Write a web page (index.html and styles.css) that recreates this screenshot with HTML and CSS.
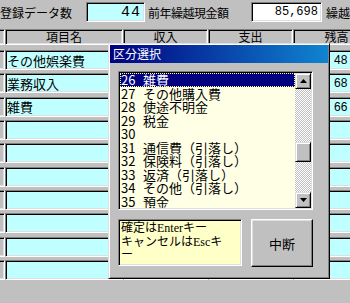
FILE: index.html
```html
<!DOCTYPE html>
<html lang="ja">
<head>
<meta charset="utf-8">
<title>区分選択</title>
<link rel="stylesheet" href="styles.css">
</head>
<body>
<div class="screen">
  <div class="topbar">
    <span class="label label-count">登録データ数</span>
    <span class="field field-cyan field-count">44</span>
    <span class="label label-carry">前年繰越現金額</span>
    <span class="field field-white field-carry">85,698</span>
    <span class="label label-next">繰越</span>
  </div>

  <div class="grid-area">
    <div class="row head">
      <div class="cell c-stub"></div>
      <div class="cell">項目名</div>
      <div class="cell">収入</div>
      <div class="cell">支出</div>
      <div class="cell">残高</div>
    </div>
    <div class="rows">
      <div class="row"><div class="cell c-stub"></div><div class="cell data name">その他娯楽費</div><div class="cell data"></div><div class="cell data"></div><div class="cell data bal">48</div></div>
      <div class="row"><div class="cell c-stub"></div><div class="cell data name">業務収入</div><div class="cell data"></div><div class="cell data"></div><div class="cell data bal">68</div></div>
      <div class="row"><div class="cell c-stub"></div><div class="cell data name">雑費</div><div class="cell data"></div><div class="cell data"></div><div class="cell data bal">66</div></div>
      <div class="row"><div class="cell c-stub"></div><div class="cell data name"></div><div class="cell data"></div><div class="cell data"></div><div class="cell data bal"></div></div>
      <div class="row"><div class="cell c-stub"></div><div class="cell data name"></div><div class="cell data"></div><div class="cell data"></div><div class="cell data bal"></div></div>
      <div class="row"><div class="cell c-stub"></div><div class="cell data name"></div><div class="cell data"></div><div class="cell data"></div><div class="cell data bal"></div></div>
      <div class="row"><div class="cell c-stub"></div><div class="cell data name"></div><div class="cell data"></div><div class="cell data"></div><div class="cell data bal"></div></div>
      <div class="row"><div class="cell c-stub"></div><div class="cell data name"></div><div class="cell data"></div><div class="cell data"></div><div class="cell data bal"></div></div>
      <div class="row"><div class="cell c-stub"></div><div class="cell data name"></div><div class="cell data"></div><div class="cell data"></div><div class="cell data bal"></div></div>
      <div class="row"><div class="cell c-stub"></div><div class="cell data name"></div><div class="cell data"></div><div class="cell data"></div><div class="cell data bal"></div></div>
    </div>
  </div>

  <div class="dialog">
    <div class="titlebar">区分選択</div>
    <div class="dlg-body">
      <div class="listbox">
        <div class="items">
          <div class="item sel"><span class="no">26</span><span>雑費</span></div>
          <div class="item"><span class="no">27</span><span>その他購入費</span></div>
          <div class="item"><span class="no">28</span><span>使途不明金</span></div>
          <div class="item"><span class="no">29</span><span>税金</span></div>
          <div class="item"><span class="no">30</span><span></span></div>
          <div class="item"><span class="no">31</span><span>通信費（引落し）</span></div>
          <div class="item"><span class="no">32</span><span>保険料（引落し）</span></div>
          <div class="item"><span class="no">33</span><span>返済（引落し）</span></div>
          <div class="item"><span class="no">34</span><span>その他（引落し）</span></div>
          <div class="item"><span class="no">35</span><span>預金</span></div>
        </div>
        <div class="scrollbar">
          <div class="sbtn"><svg width="7" height="4" viewBox="0 0 7 4"><path d="M3.5 0 L7 4 L0 4 Z" fill="#000"/></svg></div>
          <div class="track"><div class="thumb"></div></div>
          <div class="sbtn"><svg width="7" height="4" viewBox="0 0 7 4"><path d="M0 0 L7 0 L3.5 4 Z" fill="#000"/></svg></div>
        </div>
      </div>
      <div class="footer">
        <div class="message">確定はEnterキー<br>キャンセルはEscキ<br>ー</div>
        <div class="button">中断</div>
      </div>
    </div>
  </div>
</div>
</body>
</html>
```

FILE: styles.css
```css
* { box-sizing: border-box; }

html, body {
  margin: 0;
  padding: 0;
  background: #c0c0c0;
}

body {
  font-family: "Noto Sans CJK JP", sans-serif;
  color: #000;
}

.screen {
  position: relative;
  width: 350px;
  height: 303px;
  overflow: hidden;
  background: #c0c0c0;
}

/* ---------- top bar ---------- */
.topbar {
  display: flex;
  align-items: center;
  height: 23px;
  padding-top: 1px;
  font-size: 12px;
  white-space: nowrap;
}

.label-count { margin-left: 0; }
.label-carry { margin-left: 3px; letter-spacing: -0.5px; }
.label-next { margin-left: 4px; }

.field {
  height: 20px;
  display: flex;
  align-items: center;
  justify-content: flex-end;
  padding-right: 3px;
  border-top: 1px solid #808080;
  border-left: 1px solid #808080;
  border-right: 1px solid #fff;
  border-bottom: 1px solid #fff;
  box-shadow: inset 1px 1px 0 #000, inset -1px -1px 0 #dfdfdf;
  font-family: "Liberation Mono", "DejaVu Sans Mono", monospace;
}

.field-cyan { background: #c0ffff; }
.field-white { background: #fff; }

.field-count {
  width: 61px;
  margin-left: 14px;
  font-size: 15px;
  letter-spacing: 1px;
}

.field-carry {
  width: 74px;
  margin-left: 22px;
  font-size: 12px;
}

/* ---------- grid ---------- */
.grid-area {
  margin-top: 6px;
  margin-left: -60px;
  width: 440px;
}

.row {
  display: grid;
  grid-template-columns: 65px 118px 85px 85px 87px;
  height: 20px;
}

.row.head {
  height: 16px;
  font-size: 12px;
  margin-bottom: 5px;
}

.rows {
  display: flex;
  flex-direction: column;
  gap: 3.33px;
}

.cell {
  border-top: 1px solid #808080;
  border-left: 1px solid #808080;
  border-right: 1px solid #fff;
  border-bottom: 1px solid #fff;
  box-shadow: inset 1px 1px 0 #000, inset -1px -1px 0 #dfdfdf;
  display: flex;
  align-items: center;
  white-space: nowrap;
  overflow: hidden;
}

.head .cell {
  justify-content: center;
  background: #c0c0c0;
  line-height: 1;
}

.c-stub { background: #c0c0c0; }

.data {
  background: #c0ffff;
  font-size: 13px;
  padding-left: 1px;
}

.bal {
  font-family: "Liberation Sans", sans-serif;
  font-size: 12px;
  padding-left: 40px;
}

/* ---------- dialog ---------- */
.dialog {
  position: absolute;
  left: 108px;
  top: 43px;
  width: 222px;
  height: 236px;
  background: #c0c0c0;
  border: 1px solid;
  border-color: #dfdfdf #000 #000 #dfdfdf;
  box-shadow: inset 1px 1px 0 #fff, inset -1px -1px 0 #808080;
  padding: 1px;
  display: flex;
  flex-direction: column;
}

.titlebar {
  height: 18px;
  background: linear-gradient(to right, #000080, #1084d0);
  color: #fff;
  font-size: 12px;
  padding-left: 3px;
  display: flex;
  align-items: center;
  line-height: 1;
}

.dlg-body {
  padding: 8px 15px 0 8px;
}

.listbox {
  display: flex;
  height: 139px;
  background: #ffffe6;
  border-top: 1px solid #808080;
  border-left: 1px solid #808080;
  border-right: 1px solid #fff;
  border-bottom: 1px solid #fff;
  box-shadow: inset 1px 1px 0 #000, inset -1px -1px 0 #dfdfdf;
  padding: 1px;
}

.items {
  flex: 1;
  overflow: hidden;
}

.item {
  display: flex;
  height: 13.5px;
  line-height: 13.5px;
  font-size: 13px;
  white-space: nowrap;
  padding-left: 1px;
}

.item .no {
  width: 22px;
  flex: none;
}

.item.sel {
  background: #000080;
  color: #fff;
  outline: 1px dotted #ffff80;
  outline-offset: -1px;
}

.scrollbar {
  width: 16px;
  display: flex;
  flex-direction: column;
  background-color: #fff;
  background-image: conic-gradient(#c0c0c0 25%, #fff 0 50%, #c0c0c0 0 75%, #fff 0);
  background-size: 2px 2px;
}

.sbtn, .thumb {
  width: 16px;
  height: 16px;
  background: #c0c0c0;
  border-top: 1px solid #dfdfdf;
  border-left: 1px solid #dfdfdf;
  border-right: 1px solid #000;
  border-bottom: 1px solid #000;
  box-shadow: inset 1px 1px 0 #fff, inset -1px -1px 0 #808080;
  display: flex;
  align-items: center;
  justify-content: center;
}

.track {
  flex: 1;
}

.thumb {
  height: 20px;
  margin-top: 53px;
}

.footer {
  display: flex;
  gap: 9px;
  margin-top: 9px;
}

.message {
  width: 124px;
  height: 47px;
  background: #ffffc8;
  border-top: 1px solid #808080;
  border-left: 1px solid #808080;
  border-right: 1px solid #fff;
  border-bottom: 1px solid #fff;
  box-shadow: inset 1px 1px 0 #000, inset -1px -1px 0 #dfdfdf;
  padding: 2px 2px;
  font-family: "Liberation Serif", "Noto Sans CJK JP", serif;
  font-size: 12px;
  line-height: 13.5px;
  white-space: nowrap;
}

.button {
  width: 62px;
  height: 48px;
  background: #c0c0c0;
  border-top: 1px solid #fff;
  border-left: 1px solid #fff;
  border-right: 1px solid #000;
  border-bottom: 1px solid #000;
  box-shadow: inset -1px -1px 0 #808080, inset 1px 1px 0 #dfdfdf;
  display: flex;
  align-items: center;
  justify-content: center;
  font-size: 13px;
}
```
